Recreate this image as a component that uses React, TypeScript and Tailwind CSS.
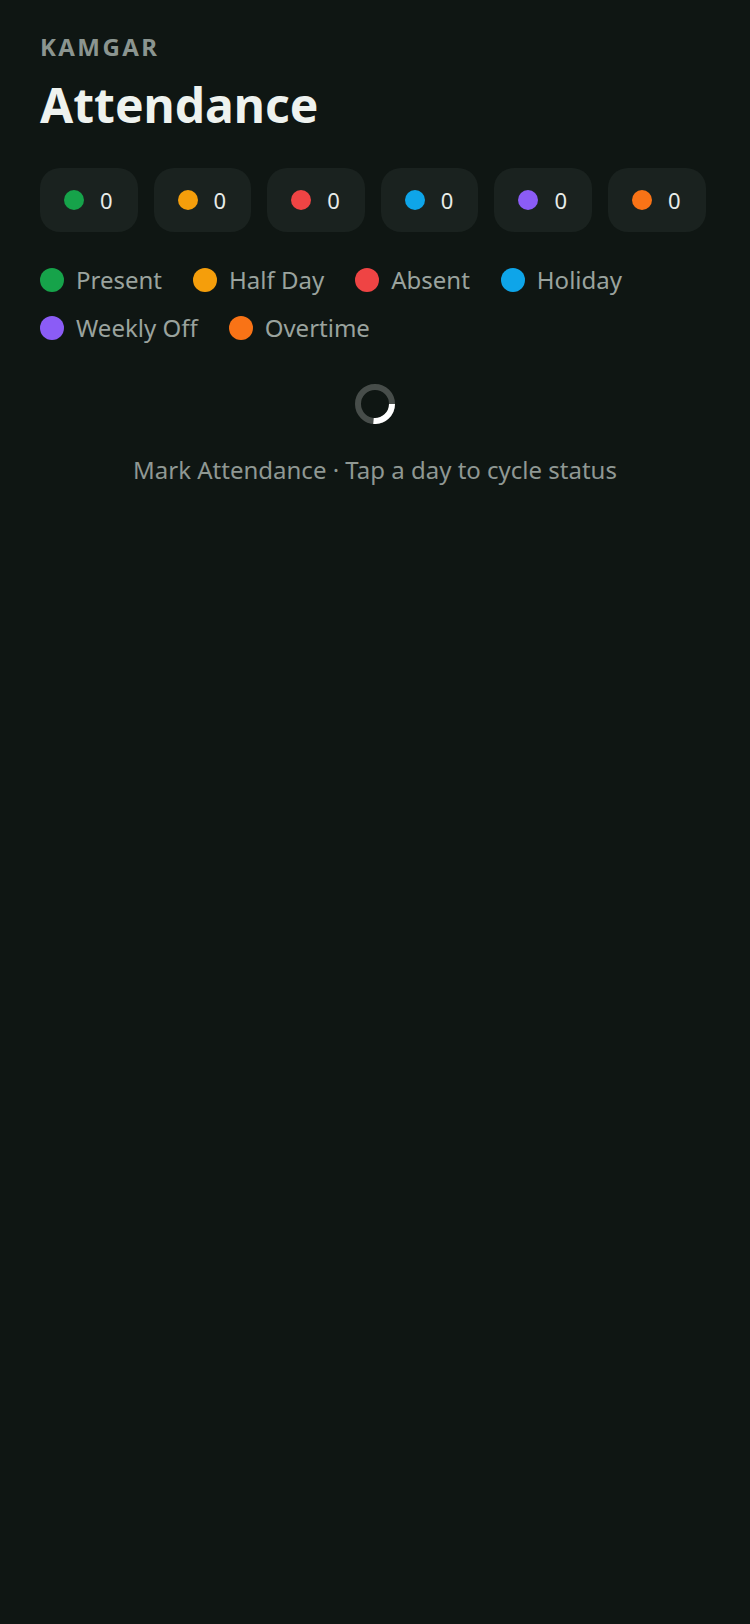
import React from "react";

const statuses = [
  { label: "Present", color: "bg-[#16a34a]" },
  { label: "Half Day", color: "bg-[#f59e0b]" },
  { label: "Absent", color: "bg-[#ef4444]" },
  { label: "Holiday", color: "bg-[#0ea5e9]" },
  { label: "Weekly Off", color: "bg-[#8b5cf6]" },
  { label: "Overtime", color: "bg-[#f97316]" },
];

export default function App() {
  return (
    <div
      className="min-h-[1624px] w-full bg-[#0f1613] px-10 pt-[31px]"
      style={{ fontFamily: '"Noto Sans", "Open Sans", sans-serif' }}
    >
      <div className="text-[24px] leading-[32px] font-bold tracking-[0.1em] text-[#8b9590]">
        KAMGAR
      </div>
      <h1 className="mt-[14px] text-[48px] leading-[56px] font-bold text-[#eef2ef]">
        Attendance
      </h1>

      <div className="mt-[35px] flex gap-4">
        {statuses.map((s) => (
          <div
            key={s.label}
            className="flex h-16 items-center gap-4 rounded-[20px] bg-[#1a221f] pl-6 pr-[25px]"
          >
            <span className={`h-5 w-5 rounded-full ${s.color}`} />
            <span className="text-[22px] leading-[30px] text-[#e8ece9]">0</span>
          </div>
        ))}
      </div>

      <div className="mt-8 flex flex-wrap gap-x-[31px] gap-y-4">
        {statuses.map((s) => (
          <div key={s.label} className="flex h-8 items-center gap-3">
            <span className={`h-6 w-6 rounded-full ${s.color}`} />
            <span className="text-[24px] leading-[32px] text-[#9aa39e]">{s.label}</span>
          </div>
        ))}
      </div>

      <div className="mt-10 flex flex-col items-center">
        <svg width="40" height="40" viewBox="0 0 40 40">
          <circle cx="20" cy="20" r="17" fill="none" stroke="#474d4a" strokeWidth="6" />
          <path
            d="M 37 20 A 17 17 0 0 1 18.5 36.93"
            fill="none"
            stroke="#ffffff"
            strokeWidth="6"
          />
        </svg>
        <p className="mt-[30px] text-[24px] leading-[32px] text-[#8f9893]">
          Mark Attendance · Tap a day to cycle status
        </p>
      </div>
    </div>
  );
}
